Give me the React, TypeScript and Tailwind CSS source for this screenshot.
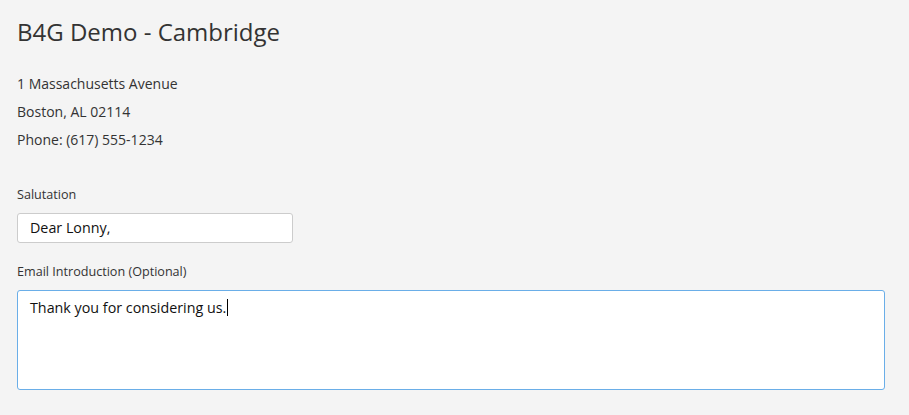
export default function App() {
  return (
    <div className="min-h-[415px] bg-[#f4f4f4] px-[17px] pt-[16px] text-[#333] font-['Open_Sans',sans-serif]">
      <h1 className="text-[24px] leading-[32px] font-normal text-[#333]">B4G Demo - Cambridge</h1>
      <div className="mt-[22px] text-[14px] leading-[28px]">
        <p>1 Massachusetts Avenue</p>
        <p>Boston, AL 02114</p>
        <p>Phone: (617) 555-1234</p>
      </div>
      <div className="mt-[32px] w-[868px]">
        <label className="block text-[12.6px] leading-[18px]">Salutation</label>
        <div className="mt-[9px] h-[30px] w-[276px] rounded-[3px] border border-[#ccc] bg-white px-[12px] text-[14.3px] leading-[28px] text-[#111]">
          Dear Lonny,
        </div>
        <label className="mt-[20px] block text-[12.6px] leading-[18px]">Email Introduction (Optional)</label>
        <div className="mt-[9px] h-[100px] w-[868px] rounded-[3px] border border-[#6aaee8] bg-white px-[12px] pt-[5px] text-[14.3px] leading-[20px] text-[#111]">
          Thank you for considering us.
          <span className="ml-px inline-block h-[17px] w-px translate-y-[3px] bg-black align-baseline" />
        </div>
      </div>
    </div>
  )
}
